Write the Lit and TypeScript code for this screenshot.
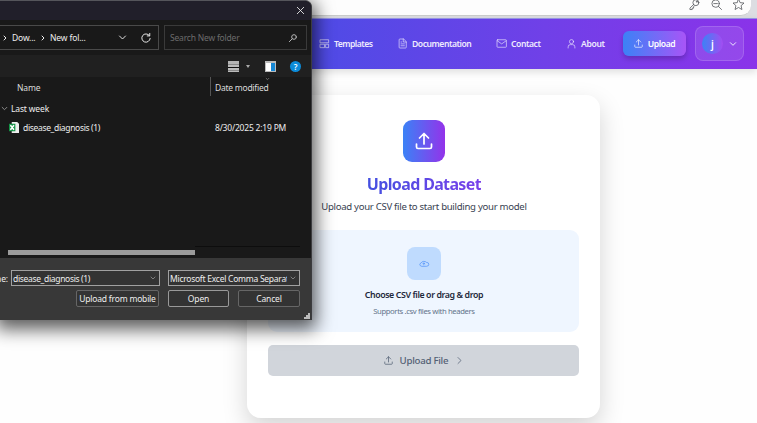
import { LitElement, html, css, svg } from "lit";
import { customElement } from "lit/decorators.js";

const icon = (cls: string, body: unknown, box = "0 0 24 24") =>
  html`<svg class="ic ${cls}" viewBox=${box} aria-hidden="true">${body}</svg>`;
const tray = svg`<path d="M2 16v4a2 2 0 0 0 2 2h16a2 2 0 0 0 2-2v-4M12 16V2M6 8l6-6 6 6"/>`;
const down = svg`<path d="m4 8 8 8 8-8"/>`;
const right = svg`<path d="m8 4 8 8-8 8"/>`;

const iconStyles = css`
  :host, * { box-sizing: border-box; }
  .ic { fill: none; stroke: currentColor; stroke-width: 1.7; stroke-linecap: round; stroke-linejoin: round; flex: none; display: block; overflow: visible; }
`;

@customElement("site-header")
export class SiteHeader extends LitElement {
  static styles = [iconStyles, css`
    :host { display: block; }
    .browser { height: 18px; background: #dcdde2; display: flex; }
    .omnibox { width: 751px; height: 16px; background: #fdfdfd; border-bottom: 1px solid #c9cbcb; border-radius: 0 0 10px 0; display: flex; justify-content: flex-end; gap: 11px; padding: 0 7px 0 0; color: #505357; }
    .omnibox .ic { width: 11px; height: 11px; margin-top: -1px; }
    .bar { height: 51px; border-top: 1px solid #9492e2; background: linear-gradient(90deg, #4650e6 0, #4f4be6 42%, #7040e8 72%, #8a33e9 100%); box-shadow: 0 3px 8px #0002; display: flex; align-items: center; justify-content: flex-end; padding: 0 13px 1px 0; color: #eeeafe; font-weight: 600; font-size: 8.600px; white-space: nowrap; }
    .item { display: flex; align-items: center; gap: 5px; }
    .item .ic { width: 9px; height: 9px; }
    .tpl { width: 78px; letter-spacing: -.52px; }
    .doc { width: 99px; letter-spacing: -.46px; }
    .con { width: 70px; letter-spacing: -.44px; }
    .abo { width: 56px; letter-spacing: -.35px; }
    .upload { width: 63px; height: 25px; border-radius: 6px; background: linear-gradient(90deg, #3b82f6, #a855f7); box-shadow: 0 3px 5px #0003; justify-content: center; letter-spacing: -.4px; color: #fff; }
    .user { margin-left: 9px; width: 49px; height: 35px; border-radius: 8px; border: 1px solid #ffffff26; background: #ffffff1a; display: flex; align-items: center; padding-left: 6px; gap: 6px; }
    .user .ic { width: 8px; height: 8px; stroke-width: 3; }
    .avatar { width: 21px; height: 21px; border-radius: 50%; background: linear-gradient(90deg, #3b82f6, #a34df2); display: grid; place-items: center; font-size: 10px; color: #fff; }
  `];
  render() {
    return html`
      <div class="browser"><div class="omnibox">
        ${icon("", svg`<circle cx="15" cy="8" r="6.5"/><circle cx="17" cy="6" r="1"/><path d="m10 12-8 8v3h5v-3h3v-3l2-2"/>`)}
        ${icon("", svg`<circle cx="10" cy="10" r="8"/><path d="m16 16 7 7M6 10h8"/>`)}
        ${icon("", svg`<path d="m12 0 3.5 8 8.5.8-6.400 5.700 1.900 8.500-7.500-4.500L4.500 23l1.900-8.500L0 8.800 8.500 8z"/>`)}
      </div></div>
      <div class="bar">
        <div class="item tpl">${icon("", svg`<path d="M1 2h22v8H1zM1 14h11v9H1zM16 14h7v9h-7z"/>`)}<span>Templates</span></div>
        <div class="item doc">${icon("", svg`<path d="M14 0H5a2 2 0 0 0-2 2v20a2 2 0 0 0 2 2h15a2 2 0 0 0 2-2V8zM14 0v8h8M8 13h9M8 18h9M8 8h2"/>`)}<span>Documentation</span></div>
        <div class="item con">${icon("", svg`<rect x="0" y="2" width="25" height="20" rx="2"/><path d="m1 5 11.500 8L24 5"/>`)}<span>Contact</span></div>
        <div class="item abo">${icon("", svg`<circle cx="12" cy="7" r="5.500"/><path d="M3 24v-3a6 6 0 0 1 6-6h6a6 6 0 0 1 6 6v3"/>`)}<span>About</span></div>
        <div class="item upload">${icon("", tray)}<span>Upload</span></div>
        <div class="user"><span class="avatar">j</span>${icon("", down)}</div>
      </div>`;
  }
}

@customElement("upload-card")
export class UploadCard extends LitElement {
  static styles = [iconStyles, css`
    :host { display: block; width: 353px; height: 323px; border-radius: 14px; background: #fff; box-shadow: 0 10px 24px #0000002b; padding: 25px 21px 0; text-align: center; white-space: nowrap; }
    .logo { width: 42px; height: 42px; border-radius: 9px; margin: 0 auto; background: linear-gradient(90deg, #3b82f6, #9333ea); color: #fff; display: grid; place-items: center; }
    .logo .ic { width: 18px; height: 18px; stroke-width: 2.300; }
    h1 { margin: 11px auto 0; width: max-content; font-size: 16px; line-height: 22px; font-weight: 700; letter-spacing: -.65px; background: linear-gradient(90deg, #4450e0, #7840ea); background-clip: text; -webkit-background-clip: text; color: transparent; }
    .lead { margin: 4px 0 0; font-size: 9.600px; line-height: 16px; color: #374151; letter-spacing: -.3px; }
    .drop { margin-top: 15px; height: 102px; border-radius: 9px; background: #eff6ff; padding-top: 17px; }
    .cloud { width: 34px; height: 33px; border-radius: 8px; background: #bfdbfe; color: #3b82f6; display: grid; place-items: center; margin: 0 auto; }
    .cloud .ic { width: 10px; height: 7px; }
    .choose { margin-top: 9px; font-size: 8.800px; line-height: 13px; font-weight: 600; color: #1e293b; letter-spacing: -.4px; }
    .hint { margin-top: 3px; font-size: 7.700px; line-height: 12px; color: #64748b; letter-spacing: -.38px; }
    .send { margin-top: 13px; height: 31px; border-radius: 5px; background: #d1d5db; color: #536074; display: flex; align-items: center; justify-content: center; gap: 7px; font-size: 9.700px; font-weight: 500; letter-spacing: -.27px; }
    .send .ic { width: 9px; height: 9px; stroke-width: 2; }
  `];
  render() {
    return html`
      <div class="logo">${icon("", tray)}</div>
      <h1>Upload Dataset</h1>
      <p class="lead">Upload your CSV file to start building your model</p>
      <div class="drop">
        <div class="cloud">${icon("", svg`<path d="M7 17a6 5 0 0 1-1-9.500A9 7 0 0 1 22 6a6 5.500 0 0 1 1 11zM14 13V8M11 10l3-3 3 3"/>`, "0 0 29 18")}</div>
        <div class="choose">Choose CSV file or drag &amp; drop</div>
        <div class="hint">Supports .csv files with headers</div>
      </div>
      <div class="send">${icon("", tray)}<span>Upload File</span>${icon("", right)}</div>`;
  }
}

@customElement("file-dialog")
export class FileDialog extends LitElement {
  static styles = [iconStyles, css`
    :host { display: block; width: 312px; height: 320px; background: #191919; border-top: 1px solid #55555b; border-right: 1px solid #3c3c3f; border-radius: 0 7px 0 0; box-shadow: 0 5px 18px 4px #000000a6; color: #eee; font-size: 8.500px; letter-spacing: -.15px; white-space: nowrap; overflow: hidden; }
    .title { height: 19px; background: #211f2a; display: flex; justify-content: flex-end; align-items: center; padding: 0 7px 1px 0; }
    .title .ic { width: 7px; height: 7px; stroke-width: 3; }
    .nav { height: 35px; display: flex; align-items: center; gap: 5px; }
    .path { width: 159px; height: 25px; border: 1px solid #4a4a4a; border-left: 0; display: flex; align-items: center; padding: 0 7px 0 2px; }
    .path .ic { width: 6px; height: 6px; stroke-width: 4; }
    .path .dow { margin: 0 5px 0 4px; width: 23px; }
    .path .fol { margin-left: 4px; width: 69px; }
    .path .v { width: 9px; height: 9px; stroke-width: 2.500; margin-right: 14px; }
    .path .r { width: 10px; height: 10px; stroke-width: 2.300; }
    .search { width: 143px; height: 25px; border: 1px solid #3a3a3a; display: flex; justify-content: space-between; align-items: center; padding: 0 9px 0 5px; color: #6c6c6c; letter-spacing: -.2px; }
    .search .ic { width: 8px; height: 8px; color: #b5b5b5; stroke-width: 3; }
    .tools { height: 22px; background: #202020; display: flex; justify-content: flex-end; align-items: center; padding-right: 10px; }
    .lines { width: 11px; height: 11px; background: linear-gradient(#b4b4b4 0 3px, #888 3px 4px, #bbb 4px 6px, #111 6px 7px, #bbb 7px 9px, #888 9px 10px, #bbb 10px); }
    .caret { margin: 1px 15px 0 7px; border: 2px solid transparent; border-top: 3px solid #aaa; border-bottom: 0; }
    .pane { width: 11px; height: 11px; border: 1px solid #bbb; border-top-width: 2px; background: linear-gradient(90deg, #fff 0 5px, #1587d4 5px); }
    .help { margin-left: 14px; width: 11px; height: 11px; border-radius: 50%; background: #0c8bd9; color: #fff; display: grid; place-items: center; font-size: 8px; font-weight: 600; line-height: 11px; }
    .heads { height: 19px; display: flex; align-items: center; color: #dcdcdc; line-height: 21px; }
    .heads .n { width: 210px; padding-left: 17px; }
    .heads .d { height: 19px; border-left: 1px solid #555; padding-left: 4px; width: 90px; position: relative; letter-spacing: -.25px; }
    .heads .n { height: 19px; }
    .sort { position: absolute; left: 54px; top: 0; width: 5px; height: 4px; color: #999; stroke-width: 4; }
    .group { height: 23px; display: flex; align-items: center; gap: 3px; padding: 1px 0 0 1px; letter-spacing: -.15px; }
    .group .ic { width: 7px; height: 7px; color: #999; stroke-width: 3; }
    .row { height: 16px; display: flex; align-items: center; padding-left: 9px; }
    .row .x { width: 10px; height: 11px; stroke: none; margin-right: 4px; }
    .row .file { width: 192px; letter-spacing: -.33px; }
    .date { letter-spacing: -.2px; }
    .track { height: 123px; padding: 115px 0 0 8px; background: linear-gradient(#0d0d0d, #0d0d0d) 195px 111px / 105px 1px no-repeat; }
    .thumb { width: 187px; height: 5px; background: #9b9b9b; }
    .foot { height: 62px; background: #383838; padding-top: 12px; position: relative; }
    .names, .buttons { display: flex; align-items: center; }
    .lab { width: 11px; display: flex; justify-content: flex-end; padding-right: 3px; }
    .combo { height: 16px; border: 1px solid #a0a0a0; background: #333; display: flex; justify-content: space-between; align-items: center; padding: 0 3px 0 1px; letter-spacing: -.33px; }
    .combo .ic { width: 6px; height: 6px; color: #999; stroke-width: 3; }
    .cname { width: 149px; margin-right: 8px; }
    .ctype { width: 132px; letter-spacing: -.26px; }
    .clip { width: 117px; overflow: hidden; }
    .buttons { margin-top: 4px; padding-left: 76px; }
    .btn { height: 17px; border: 1px solid #666; border-radius: 2px; background: #333; display: grid; place-items: center; }
    .mob { width: 83px; margin-right: 9px; letter-spacing: -.2px; }
    .open { width: 61px; border-color: #999; margin-right: 9px; }
    .cancel { width: 62px; }
    .grip { position: absolute; right: 1px; bottom: 1px; width: 6px; height: 6px; stroke: none; fill: #bbb; }
  `];
  render() {
    return html`
      <div class="title">${icon("", svg`<path d="m1 1 22 22M23 1 1 23"/>`)}</div>
      <div class="nav">
        <div class="path">${icon("", right)}<span class="dow">Dow...</span>${icon("", right)}<span class="fol">New fol...</span>${icon("v", down)}${icon("r", svg`<path d="M20 6A10 10 0 1 0 22 13M21 1v6h-6"/>`)}</div>
        <div class="search"><span>Search New folder</span>${icon("", svg`<circle cx="15" cy="9" r="7"/><path d="m10 14-9 9"/>`)}</div>
      </div>
      <div class="tools"><i class="lines"></i><i class="caret"></i><i class="pane"></i><span class="help">?</span></div>
      <div class="heads"><span class="n">Name</span><span class="d">Date modified${icon("sort", down)}</span></div>
      <div class="group">${icon("", down)}<span>Last week</span></div>
      <div class="row">
        ${icon("x", svg`<path fill="#eee" d="M3 0h6l2 2v10H3z"/><path fill="#159447" d="M0 2h7v8H0z"/><path stroke="#fff" d="m2 4 3 4m0-4L2 8"/>`, "0 0 11 12")}
        <span class="file">disease_diagnosis (1)</span><span class="date">8/30/2025 2:19 PM</span>
      </div>
      <div class="track"><div class="thumb"></div></div>
      <div class="foot">
        <div class="names"><span class="lab">ne:</span><div class="combo cname"><span>disease_diagnosis (1)</span>${icon("", down)}</div><div class="combo ctype"><span class="clip">Microsoft Excel Comma Separated</span>${icon("", down)}</div></div>
        <div class="buttons"><div class="btn mob">Upload from mobile</div><div class="btn open">Open</div><div class="btn cancel">Cancel</div></div>
        ${icon("grip", svg`<path d="M4 0h2v2H4zM2 2h2v2H2zM4 2h2v2H4zM0 4h2v2H0zM2 4h2v2H2zM4 4h2v2H4z"/>`, "0 0 6 6")}
      </div>`;
  }
}

@customElement("app-root")
export class AppRoot extends LitElement {
  static styles = css`
    :host { display: block; position: relative; width: 757px; height: 423px; overflow: hidden; background: #fefefe; font-family: "Noto Sans", "Open Sans", sans-serif; }
    upload-card { margin: 26px 0 0 247.4px; }
    file-dialog { position: absolute; left: 0; top: 0; }
  `;
  render() {
    return html`<site-header></site-header><upload-card></upload-card><file-dialog></file-dialog>`;
  }
}
